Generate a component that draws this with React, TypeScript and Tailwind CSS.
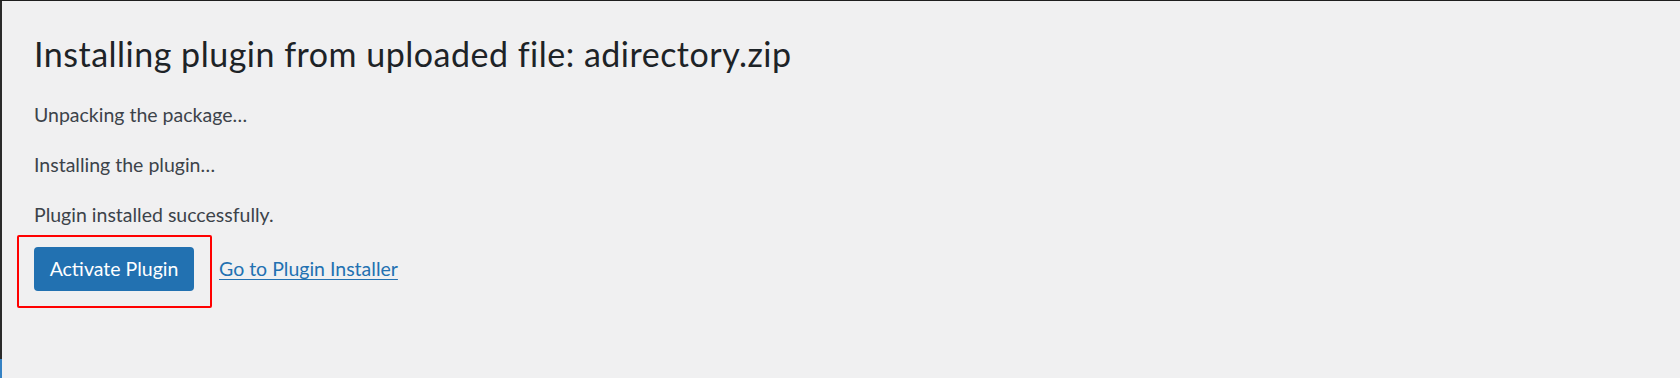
import React from 'react';

const steps = ['Unpacking the package…', 'Installing the plugin…', 'Plugin installed successfully.'];

const App: React.FC = () => {
  return (
    <div
      className="flex h-[378px] w-[1680px] overflow-hidden border-t border-[#1e1e1e] bg-[#f0f0f1]"
      style={{ fontFamily: 'Lato, "Noto Sans", sans-serif' }}
    >
      {/* левая кромка окна */}
      <div className="flex w-[2px] shrink-0 flex-col bg-[#2a2a2a]">
        <div className="mt-auto h-[19px] bg-[#3582c4]" />
      </div>

      <div className="flex-1 pl-[32px]">
        <h1 className="mt-[31px] text-[34px] leading-[44px] font-normal tracking-[0.5px] text-[#1d2327]">
          Installing plugin from uploaded file: adirectory.zip
        </h1>

        <div className="mt-[24px] flex flex-col gap-[20px]">
          {steps.map((s) => (
            <p key={s} className="text-[19.5px] leading-[30px] text-[#3c434a]">
              {s}
            </p>
          ))}
        </div>

        <div className="mt-[17px] flex items-center gap-[25px]">
          <div className="relative">
            <button className="h-[44px] w-[160px] rounded-[4px] bg-[#2271b1] text-[19.5px] text-white">
              Activate Plugin
            </button>
            {/* красная рамка-выделение */}
            <div className="pointer-events-none absolute -top-[12px] -bottom-[17px] -left-[17px] -right-[18px] rounded-[2px] border-2 border-[#ff0000]" />
          </div>
          <a href="#" className="text-[19.5px] text-[#2271b1] underline underline-offset-[3px]">
            Go to Plugin Installer
          </a>
        </div>
      </div>
    </div>
  );
};

export default App;
